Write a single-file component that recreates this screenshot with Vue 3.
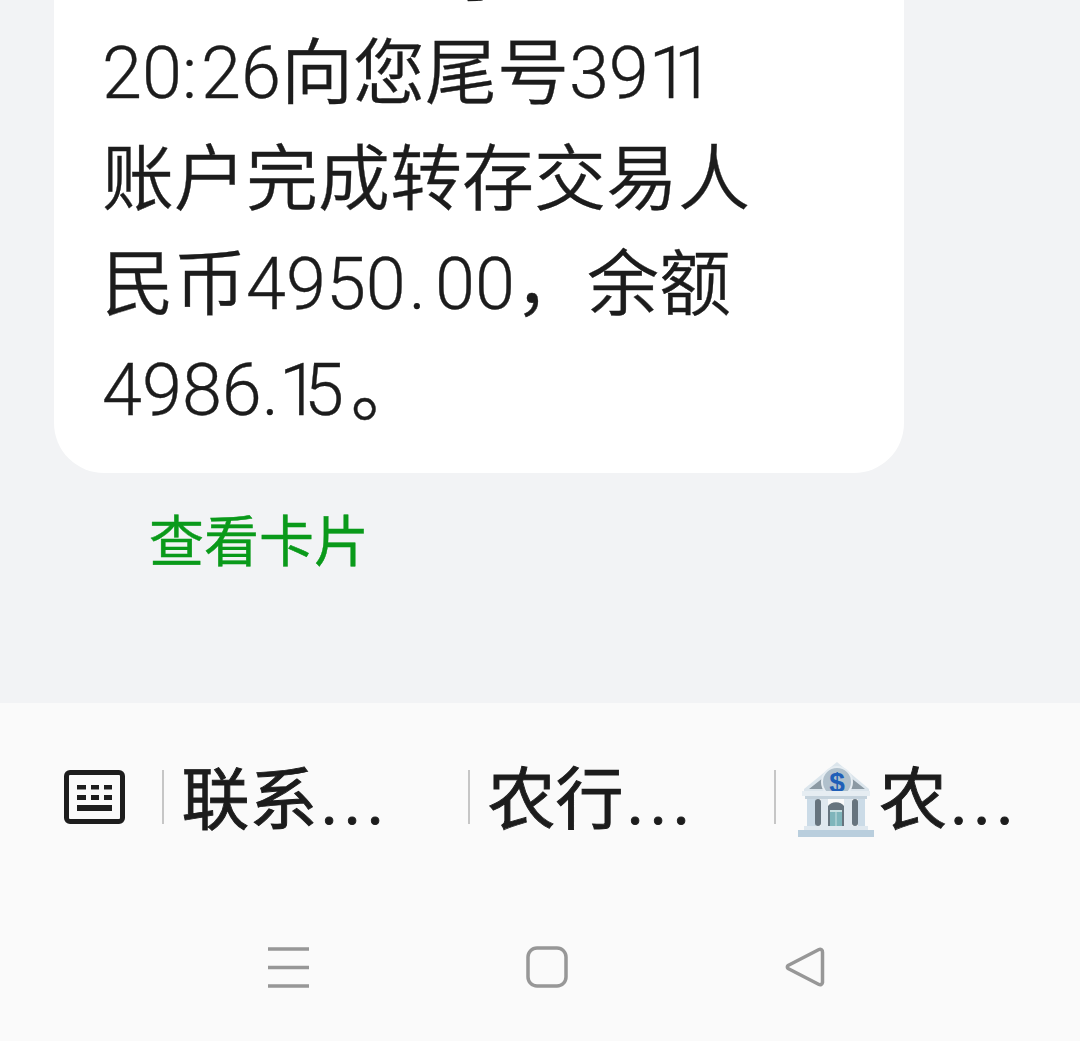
<script setup>
const lines = ['20:26向您尾号3911', '账户完成转存交易人', '民币4950.00，余额', '4986.15。']
  .map((text) => text.split(/(1|:|。|\.(?=00))/).filter(Boolean))
const partClasses = { 1: 'one', '.': 'wide', ':': 'colon', '。': 'stop' }
const partClass = (part) => partClasses[part] || ''
const chips = [
  { text: '联系', bank: false },
  { text: '农行', bank: false },
  { text: '农', bank: true },
]
</script>

<template>
  <div class="page">
    <main class="thread">
      <section class="bubble">
        <p class="line line-clipped">于</p>
        <p v-for="(parts, i) in lines" :key="i" class="line"><span v-for="(part, j) in parts" :key="j" :class="partClass(part)">{{ part }}</span></p>
      </section>
      <a class="card-link">查看卡片</a>
    </main>
    <footer class="dock">
      <div class="suggestions">
        <div class="kbd-cell">
          <svg class="kbd" viewBox="0 0 62 54" width="62" height="54">
            <rect x="2.5" y="2.5" width="56" height="49" rx="3.5" fill="none" stroke="#1d1d1d" stroke-width="5" />
            <g fill="#1d1d1d">
              <rect x="13" y="15" width="9" height="4.500" /><rect x="27" y="15" width="8" height="4.500" /><rect x="40" y="15" width="8" height="4.500" />
              <rect x="13" y="25" width="9" height="5" /><rect x="27" y="25" width="8" height="5" /><rect x="40" y="25" width="8" height="5" />
              <rect x="13" y="35" width="35" height="6" />
            </g>
          </svg>
        </div>
        <div v-for="chip in chips" :key="chip.text" class="chip">
          <svg v-if="chip.bank" class="bank" viewBox="0 0 76 76" width="76" height="76">
            <path d="M39 0 71 27v3H6v-3Z" fill="#dbe5ec" />
            <path d="M11 27 30 12v15Zm56 0L48 12v15Z" fill="#8b99a3" />
            <circle cx="39" cy="20" r="15" fill="#b0c0cc" stroke="#e6edf2" stroke-width="2" />
            <text x="39" y="30" text-anchor="middle" class="dollar">$</text>
            <rect x="4" y="29" width="68" height="5" fill="#e6edf2" />
            <rect x="7" y="34" width="62" height="3" fill="#c4d2dc" />
            <rect x="9" y="37" width="9" height="27" fill="#cbdbe7" />
            <rect x="17" y="37" width="6" height="27" rx="3" fill="#66747e" />
            <rect x="23" y="37" width="7" height="27" fill="#dfe8ef" />
            <path d="M30 64V44a9 7 0 0 1 16 0v20Z" fill="#66747e" />
            <rect x="32" y="48" width="12" height="16" fill="#7eb5bb" />
            <rect x="32" y="48" width="12" height="2" fill="#c6e0e2" />
            <rect x="37.500" y="50" width="1" height="14" fill="#c6e0e2" />
            <rect x="46" y="37" width="8" height="27" fill="#dfe8ef" />
            <rect x="54" y="37" width="6" height="27" rx="3" fill="#66747e" />
            <rect x="60" y="37" width="7" height="27" fill="#cbdbe7" />
            <rect x="6" y="64" width="64" height="4" fill="#dfe8ef" />
            <rect x="0" y="68" width="76" height="7" fill="#b9cedd" />
          </svg>
          <span class="chip-text">{{ chip.text }}<span class="dots">...</span></span>
        </div>
      </div>
      <nav class="nav">
        <svg viewBox="0 0 44 42" width="44" height="42" class="nav-menu">
          <path d="M1 3h41M1 21.500h41M1 40h41" stroke="#979797" stroke-width="3.500" fill="none" />
        </svg>
        <svg viewBox="0 0 42 42" width="42" height="42" class="nav-home">
          <rect x="2" y="2" width="38" height="38" rx="9" fill="none" stroke="#979797" stroke-width="3.500" />
        </svg>
        <svg viewBox="0 0 42 42" width="42" height="42" class="nav-back">
          <path d="M35 3.500 4 19.500a2 2 0 0 0 0 3L35 38.500a2.500 2.500 0 0 0 3.500-2V6a2.500 2.500 0 0 0-3.500-2.500Z" fill="none" stroke="#979797" stroke-width="3.500" stroke-linejoin="round" />
        </svg>
      </nav>
    </footer>
  </div>
</template>

<style>
html, body { margin: 0; background: #f2f3f5; }
</style>

<style scoped>
.page {
  width: 1080px;
  height: 1041px;
  overflow: hidden;
  display: flex;
  flex-direction: column;
  font-family: Roboto, "Noto Sans CJK SC", "Noto Sans", sans-serif;
  color: #1c1c1c;
}
.thread {
  height: 703px;
  flex: none;
  display: flex;
  flex-direction: column;
  justify-content: flex-end;
  overflow: hidden;
  background: #f2f3f5;
  padding: 0 0 131px 54px;
  box-sizing: border-box;
}
.bubble {
  flex: none;
  width: 850px;
  box-sizing: border-box;
  background: #fff;
  border-radius: 0 0 50px 50px;
  padding: 0 47px 30px 48px;
}
.line {
  margin: 0;
  font-size: 72px;
  line-height: 105.500px;
  font-weight: 350;
  white-space: nowrap;
  -webkit-text-stroke: 0.35px #1c1c1c;
}
.line-clipped {
  text-indent: 345px;
  margin-bottom: -2px;
}
.one { letter-spacing: -15px; }
.wide { letter-spacing: 6px; margin-left: 3px; margin-right: 3px; }
.colon { letter-spacing: 4px; }
.stop { margin-left: 7px; }
.card-link {
  display: block;
  margin: 38px 0 0 95px;
  height: 61px;
  font-size: 55px;
  line-height: 62px;
  color: #0a9a1a;
  -webkit-text-stroke: 0.4px #0a9a1a;
}
.dock {
  flex: 1;
  background: #fafafa;
}
.suggestions {
  display: grid;
  grid-template-columns: 108px 306px 306px 1fr;
  height: 195px;
  padding: 67px 0 0 54px;
  box-sizing: border-box;
}
.kbd-cell { padding: 0 0 0 10px; }
.kbd { display: block; }
.chip {
  display: flex;
  align-items: center;
  height: 54px;
  border-left: 2px solid #c6c6c6;
  box-sizing: border-box;
  padding-left: 17.500px;
  white-space: nowrap;
}
.chip-text {
  font-size: 68px;
  font-weight: 400;
  line-height: 62px;
  margin-top: 8px;
  -webkit-text-stroke: 0.9px #1c1c1c;
}
.dots { letter-spacing: 5px; margin-left: 3px; }
.bank { flex: none; margin: 6px 5px 0 4.500px; }
.dollar { font: 700 28px "Liberation Sans", sans-serif; fill: #1f5fb8; }
.nav {
  display: flex;
  align-items: center;
  height: 42px;
  padding-top: 48px;
  padding-left: 267px;
}
.nav-home { margin-left: 215px; }
.nav-back { margin-left: 216px; }
</style>
